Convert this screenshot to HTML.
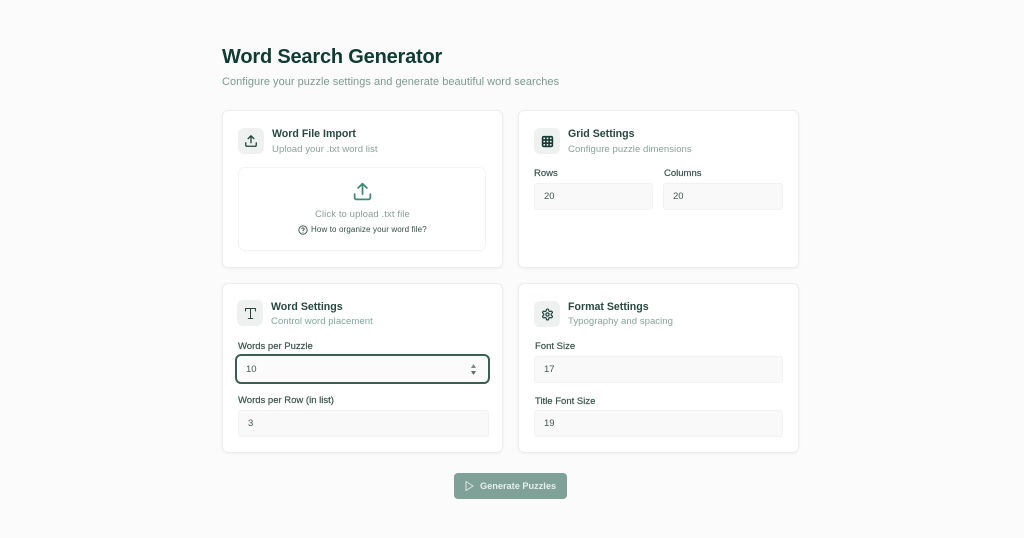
<!DOCTYPE html>
<html>
<head>
<meta charset="utf-8">
<style>
html,body{margin:0;padding:0;}
body{width:1024px;height:538px;background:#fbfbfb;font-family:"Liberation Sans",sans-serif;position:relative;overflow:hidden;}
.a{position:absolute;white-space:nowrap;}
.card{position:absolute;background:#fff;border:1px solid #eceeed;border-radius:6px;box-shadow:0 1px 3px rgba(0,0,0,.05);box-sizing:border-box;}
.ic{position:absolute;width:26px;height:26px;background:#eef1f0;border-radius:6px;display:flex;align-items:center;justify-content:center;}
.t{font-size:10.6px;font-weight:700;color:#28483f;}
.s{font-size:9.6px;color:#8aa39b;letter-spacing:.02px;}
.l{font-size:9.5px;color:#3a544d;line-height:12px;-webkit-text-stroke:.2px #3a544d;}
.i{position:absolute;box-sizing:border-box;height:27px;background:#f8f9f8;border:1px solid #f1f3f2;border-radius:3px;font-size:9.5px;color:#46574f;line-height:25px;padding-left:9px;}
</style>
</head>
<body>
<div class="a" style="left:222px;top:45px;font-size:20px;line-height:24px;font-weight:700;color:#0f3b30;letter-spacing:-.19px;">Word Search Generator</div>
<div class="a" style="left:222px;top:75px;font-size:11px;line-height:14px;color:#7d9a91;letter-spacing:.03px;">Configure your puzzle settings and generate beautiful word searches</div>

<div class="card" style="left:222px;top:110px;width:281px;height:158px;"></div>
<div class="ic" style="left:238px;top:128px;"><svg width="14" height="14" viewBox="0 0 24 24" fill="none" stroke="#1f4239" stroke-width="2.2" stroke-linecap="round" stroke-linejoin="round"><path d="M21 15v4a2 2 0 0 1-2 2H5a2 2 0 0 1-2-2v-4M17 8l-5-5-5 5M12 3v12"/></svg></div>
<div class="a t" style="left:272px;top:127px;line-height:14px;">Word File Import</div>
<div class="a s" style="left:272px;top:144px;line-height:12px;">Upload your .txt word list</div>
<div style="position:absolute;left:238px;top:167px;width:248px;height:84px;box-sizing:border-box;border:1px solid #f3f5f4;border-radius:7px;background:#fff;box-shadow:0 1px 1px rgba(0,0,0,.02);"></div>
<svg class="a" style="left:352px;top:181px;" width="21" height="21" viewBox="0 0 24 24" fill="none" stroke="#3f8a73" stroke-width="2" stroke-linecap="round" stroke-linejoin="round"><path d="M21 15v4a2 2 0 0 1-2 2H5a2 2 0 0 1-2-2v-4M17 8l-5-5-5 5M12 3v12"/></svg>
<div class="a" style="left:315px;top:209px;font-size:9.5px;line-height:12px;color:#8b9e98;letter-spacing:.1px;">Click to upload .txt file</div>
<svg class="a" style="left:298px;top:225px;" width="10" height="10" viewBox="0 0 24 24" fill="none" stroke="#2f4a43" stroke-width="2.2" stroke-linecap="round"><circle cx="12" cy="12" r="10"/><path d="M9.1 9a3 3 0 0 1 5.8 1c0 2-3 2.6-3 4"/><path d="M12 17.5h.01"/></svg>
<div class="a" style="left:311px;top:224px;font-size:8px;line-height:11px;color:#2f5047;letter-spacing:.12px;">How to organize your word file?</div>

<div class="card" style="left:518px;top:110px;width:281px;height:158px;"></div>
<div class="ic" style="left:534px;top:128px;"><svg width="13" height="13" viewBox="0 0 24 24" fill="none" stroke="#173b32" stroke-width="3"><rect x="3" y="3" width="18" height="18" rx="2"/><path d="M3 9h18M3 15h18M9 3v18M15 3v18"/></svg></div>
<div class="a t" style="left:568px;top:127px;line-height:14px;">Grid Settings</div>
<div class="a s" style="left:568px;top:144px;line-height:12px;">Configure puzzle dimensions</div>
<div class="a l" style="left:534px;top:168px;">Rows</div>
<div class="a l" style="left:664px;top:168px;">Columns</div>
<div class="i" style="left:534px;top:183px;width:119px;">20</div>
<div class="i" style="left:663px;top:183px;width:120px;">20</div>

<div class="card" style="left:222px;top:283px;width:281px;height:170px;"></div>
<div class="ic" style="left:237px;top:300px;"><svg width="15" height="15" viewBox="0 0 24 24" fill="none" stroke="#2a463e" stroke-width="1.7" stroke-linecap="round" stroke-linejoin="round"><path d="M4 8V4h16v4M12 4v16M8.5 20h7"/></svg></div>
<div class="a t" style="left:271px;top:300px;line-height:14px;">Word Settings</div>
<div class="a s" style="left:271px;top:316px;line-height:12px;color:#7fa99c;">Control word placement</div>
<div class="a l" style="left:238px;top:341px;">Words per Puzzle</div>
<div class="i" style="left:235px;top:354px;width:255px;height:30px;border:2px solid #3a5f55;border-radius:6px;background:#fafbfa;line-height:27px;">10</div>
<svg class="a" style="left:470px;top:363px;" width="7" height="13" viewBox="0 0 7 13"><path d="M3.5 1L6 5H1z" fill="#7b8a85"/><path d="M3.5 12L6 8H1z" fill="#5f6f6a"/></svg>
<div class="a l" style="left:238px;top:395px;">Words per Row (in list)</div>
<div class="i" style="left:238px;top:410px;width:251px;">3</div>

<div class="card" style="left:518px;top:283px;width:281px;height:170px;"></div>
<div class="ic" style="left:534px;top:301px;"><svg width="13" height="13" viewBox="0 0 24 24" fill="none" stroke="#1f4239" stroke-width="2.2" stroke-linecap="round" stroke-linejoin="round"><path d="M12.2 2h-.4a2 2 0 0 0-2 2v.2a2 2 0 0 1-1 1.7l-.4.3a2 2 0 0 1-2 0l-.2-.1a2 2 0 0 0-2.7.7l-.2.4a2 2 0 0 0 .7 2.7l.2.1a2 2 0 0 1 1 1.7v.6a2 2 0 0 1-1 1.7l-.2.1a2 2 0 0 0-.7 2.7l.2.4a2 2 0 0 0 2.7.7l.2-.1a2 2 0 0 1 2 0l.4.3a2 2 0 0 1 1 1.7v.2a2 2 0 0 0 2 2h.4a2 2 0 0 0 2-2v-.2a2 2 0 0 1 1-1.7l.4-.3a2 2 0 0 1 2 0l.2.1a2 2 0 0 0 2.7-.7l.2-.4a2 2 0 0 0-.7-2.7l-.2-.1a2 2 0 0 1-1-1.7v-.6a2 2 0 0 1 1-1.7l.2-.1a2 2 0 0 0 .7-2.7l-.2-.4a2 2 0 0 0-2.7-.7l-.2.1a2 2 0 0 1-2 0l-.4-.3a2 2 0 0 1-1-1.7V4a2 2 0 0 0-2-2z"/><circle cx="12" cy="12" r="3"/></svg></div>
<div class="a t" style="left:568px;top:300px;line-height:14px;">Format Settings</div>
<div class="a s" style="left:568px;top:316px;line-height:12px;">Typography and spacing</div>
<div class="a l" style="left:535px;top:341px;">Font Size</div>
<div class="i" style="left:534px;top:356px;width:249px;">17</div>
<div class="a l" style="left:535px;top:396px;">Title Font Size</div>
<div class="i" style="left:534px;top:410px;width:249px;">19</div>

<div style="position:absolute;left:454px;top:473px;width:113px;height:26px;background:#7fa197;border-radius:4px;"></div>
<svg class="a" style="left:464px;top:480px;" width="10" height="12" viewBox="0 0 10 12" fill="none" stroke="#dfe9e6" stroke-width="1" stroke-linejoin="round"><path d="M2 1.5v9L9 6z"/></svg>
<div class="a" style="left:480px;top:480px;font-size:9.2px;line-height:12px;font-weight:700;color:#e6eeeb;">Generate Puzzles</div>
</body>
</html>
